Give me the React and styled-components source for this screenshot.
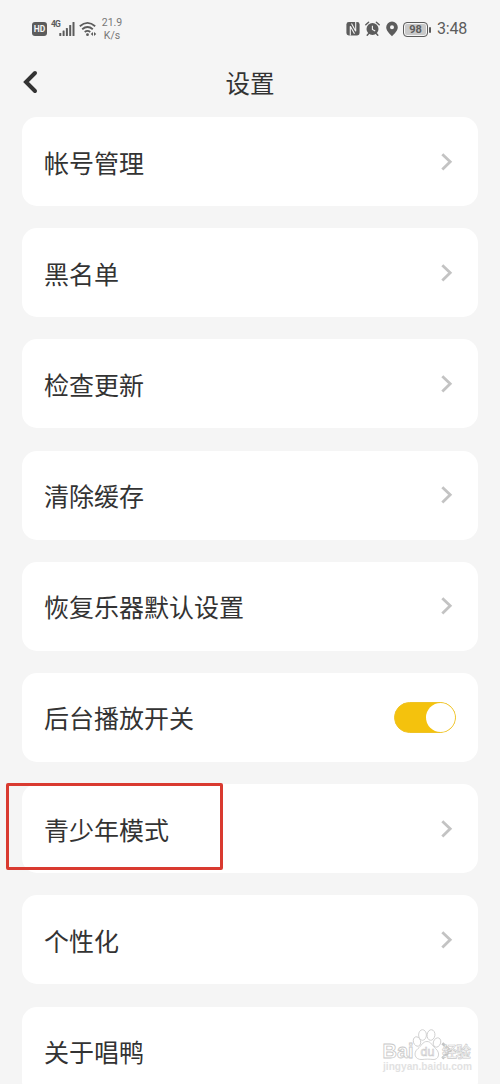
import React from 'react';
import styled, { createGlobalStyle } from 'styled-components';

const textColor = '#333333';
const statusColor = '#5c5c5c';
const font = "'Noto Sans CJK SC', sans-serif";

const GlobalStyle = createGlobalStyle`
  body {
    margin: 0;
    background-color: #f5f5f5;
    overflow: hidden;
  }
  * {
    box-sizing: border-box;
  }
`;
const Container = styled.div`
  position: relative;
  width: 500px;
  height: 1084px;
  overflow: hidden;
  background-color: #f5f5f5;
  color: ${textColor};
  font-family: ${font};
`;
const StatusBar = styled.div`
  display: flex;
  align-items: center;
  justify-content: space-between;
  height: 58px;
  padding: 0 33px 0 32px;
  color: ${statusColor};
`;
const StatusGroup = styled.div`
  display: flex;
  align-items: center;
  svg {
    display: block;
    flex: none;
  }
`;
const HdBadge = styled.span`
  display: flex;
  align-items: center;
  justify-content: center;
  width: 15px;
  height: 14px;
  margin-right: 4px;
  border-radius: 3px;
  background-color: ${statusColor};
  color: #f5f5f5;
  font: bold 8.5px/14px 'Roboto', sans-serif;
`;
const Network = styled.span`
  width: 8px;
  margin-bottom: 10px;
  font: bold 8.5px/9px 'Roboto', sans-serif;
  letter-spacing: -1px;
`;
const Speed = styled.span`
  width: 22px;
  margin-left: 4px;
  font: 10.5px/13px 'Roboto', sans-serif;
  text-align: center;
  color: #777777;
`;
const Battery = styled.span`
  position: relative;
  width: 25px;
  height: 15px;
  margin: 0 9px 0 5px;
  border: 1px solid ${statusColor};
  border-radius: 4px;
  background-color: #c9c9c9;
  box-shadow: inset 0 0 0 1px #f5f5f5;
  font: bold 11px/13px 'Roboto', sans-serif;
  text-align: center;
  &::after {
    content: '';
    position: absolute;
    top: 4px;
    right: -4px;
    width: 2px;
    height: 6px;
    border-radius: 1px;
    background-color: ${statusColor};
  }
`;
const Time = styled.span`
  width: 30px;
  font: 16px/20px 'Roboto', sans-serif;
  letter-spacing: -0.2px;
  white-space: nowrap;
`;
const Header = styled.header`
  display: grid;
  grid-template-columns: 50px 1fr 50px;
  align-items: center;
  height: 50px;
  margin-bottom: 9px;
`;
const BackButton = styled.button`
  display: flex;
  padding: 0 0 2px 22px;
  border: 0;
  background: none;
`;
const Title = styled.h1`
  margin: 0;
  font-size: 24.5px;
  font-weight: 400;
  line-height: 36px;
  text-align: center;
`;
const List = styled.div`
  display: flex;
  flex-direction: column;
  gap: 22.2px;
  padding: 0 22px;
`;
const Row = styled.div`
  display: flex;
  position: relative;
  flex: none;
  align-items: center;
  justify-content: space-between;
  height: 89px;
  padding: 0 22px;
  border-radius: 15px;
  background-color: #ffffff;
`;
const Label = styled.span`
  font-size: 25px;
  line-height: 36px;
`;
const Chevron = styled.svg`
  margin: 0 2px 0 0;
`;
const Toggle = styled.span`
  display: flex;
  justify-content: flex-end;
  width: 62px;
  height: 31px;
  border: 1px solid #efc326;
  border-radius: 16px;
  background-color: #f4c20d;
`;
const Knob = styled.span`
  width: 29px;
  height: 29px;
  border-radius: 50%;
  background-color: #ffffff;
`;
const Highlight = styled.span`
  position: absolute;
  top: -1px;
  left: -16px;
  width: 217px;
  height: 87px;
  border: 3px solid #d93a30;
  border-radius: 2px;
`;
const Watermark = styled.svg`
  position: absolute;
  left: 378px;
  top: 1024px;
`;

const items = [
  { label: '帐号管理' },
  { label: '黑名单' },
  { label: '检查更新' },
  { label: '清除缓存' },
  { label: '恢复乐器默认设置' },
  { label: '后台播放开关', toggle: true },
  { label: '青少年模式', highlighted: true },
  { label: '个性化' },
  { label: '关于唱鸭' },
];

const SignalIcon = () => (
  <svg width="16" height="16" viewBox="0 0 16 16" fill="currentColor">
    <rect x="0.3" y="12" width="2" height="3" rx=".5" />
    <rect x="3.6" y="9.5" width="2" height="5.5" rx=".5" />
    <rect x="6.9" y="7" width="2" height="8" rx=".5" />
    <rect x="10.2" y="4" width="2" height="11" rx=".5" />
    <rect x="13.5" y="1" width="2" height="14" rx=".5" />
  </svg>
);

const WifiGlyph = styled.svg`
  margin-left: 4px;
`;

const WifiIcon = () => (
  <WifiGlyph width="18" height="16" viewBox="0 0 18 16" fill="none" stroke="currentColor" strokeWidth="1.8">
    <path d="M.8 5.2q7.7-6.7 15.4 0M3.2 8.2q5.3-4.5 10.6 0M5.7 11q2.8-2.2 5.6 0" />
    <circle cx="8.5" cy="13.7" r="1.4" fill="currentColor" stroke="none" />
    <path d="M14 11 11.8 13l2.2 2zM15 11l2.2 2-2.2 2z" fill="currentColor" stroke="none" />
  </WifiGlyph>
);

const NfcIcon = () => (
  <svg width="14" height="16" viewBox="0 0 14 16">
    <rect x=".4" y="1" width="13.2" height="13.4" rx="2.4" fill="currentColor" />
    <path d="M4.3 14.6V5.2l4.2 7.6M9.700 .8v9.400L5.500 2.600" fill="none" stroke="#f5f5f5" strokeWidth="1.1" />
  </svg>
);

const AlarmGlyph = styled.svg`
  margin-left: 5px;
`;

const AlarmIcon = () => (
  <AlarmGlyph width="15" height="16" viewBox="0 0 15 16">
    <circle cx="7.5" cy="8" r="6" fill="currentColor" />
    <path d="M.8 3.8 3.6 1.2M14.2 3.8 11.4 1.2M3.5 12.7l-1.3 1.6M11.5 12.7l1.3 1.6" stroke="currentColor" strokeWidth="1.4" strokeLinecap="round" />
    <path d="M7.4 4.7V8.5l2.8 1.4" fill="none" stroke="#f5f5f5" strokeWidth="1.1" />
  </AlarmGlyph>
);

const PinGlyph = styled.svg`
  margin-left: 6px;
`;

const PinIcon = () => (
  <PinGlyph width="12" height="16" viewBox="0 0 12 16">
    <path fill="currentColor" fillRule="evenodd" d="M6 .5a5.8 5.8 0 0 1 5.8 5.8C11.8 10 8.5 12.5 6 15.2 3.5 12.5.2 10 .2 6.3A5.8 5.8 0 0 1 6 .5zM6 4.3a2 2 0 1 0 0 4 2 2 0 0 0 0-4z" />
  </PinGlyph>
);

const SettingRow = ({ label, toggle, highlighted }) => (
  <Row>
    <Label>{label}</Label>
    {toggle ? (
      <Toggle>
        <Knob />
      </Toggle>
    ) : (
      <Chevron width="14" height="20" viewBox="0 0 14 20" fill="none" stroke="#c3c3c3" strokeWidth="2.8">
        <path d="M2.3 2.2 10.2 9.8 2.3 17.4" />
      </Chevron>
    )}
    {highlighted && <Highlight />}
  </Row>
);

const BaiduWatermark = () => (
  <Watermark width="100" height="54" viewBox="0 0 100 54" fill="#ffffff" stroke="#c8c8c8" strokeWidth=".8">
    <text x="4.5" y="33.5" fontFamily="Liberation Sans, sans-serif" fontSize="20" fontWeight="bold" textLength="31" lengthAdjust="spacingAndGlyphs">Bai</text>
    <ellipse cx="39" cy="17.5" rx="3.6" ry="4.8" transform="rotate(-18 39 17.5)" />
    <ellipse cx="44.5" cy="11" rx="3.9" ry="5.3" />
    <ellipse cx="53" cy="11" rx="3.9" ry="5.3" transform="rotate(8 53 11)" />
    <ellipse cx="59" cy="18.500" rx="3.6" ry="4.8" transform="rotate(22 59 18.500)" />
    <path d="M49 17.5c4 0 5 4 8.500 7 5.500 4.500 3 11.500-2.500 11-4-.5-7-.5-11 0-7 .5-9.500-6.500-4-11 3.500-2.500 4.500-7 9-7z" />
    <text x="42.5" y="32" fontFamily="Liberation Sans, sans-serif" fontSize="12.5" textLength="14" strokeWidth=".6">du</text>
    <text x="64" y="33" fontFamily="Noto Sans CJK SC, sans-serif" fontSize="15" fontWeight="500" textLength="29" strokeWidth=".6">经验</text>
    <text x="5" y="45.5" fontFamily="Liberation Sans, sans-serif" fontSize="10" fontWeight="bold" textLength="89" lengthAdjust="spacingAndGlyphs" fill="#e2e2e2" stroke="none">jingyan.baidu.com</text>
  </Watermark>
);

const App = () => {
  return (
    <Container>
      <GlobalStyle />
      <StatusBar>
        <StatusGroup>
          <HdBadge>HD</HdBadge>
          <Network>4G</Network>
          <SignalIcon />
          <WifiIcon />
          <Speed>21.9 K/s</Speed>
        </StatusGroup>
        <StatusGroup>
          <NfcIcon />
          <AlarmIcon />
          <PinIcon />
          <Battery>98</Battery>
          <Time>3:48</Time>
        </StatusGroup>
      </StatusBar>
      <Header>
        <BackButton aria-label="返回">
          <svg width="18" height="26" viewBox="0 0 18 26" fill="none" stroke={textColor} strokeWidth="4" strokeLinecap="round">
            <path d="M13 4 4 13l9 9" />
          </svg>
        </BackButton>
        <Title>设置</Title>
      </Header>
      <List>
        {items.map(item => (
          <SettingRow key={item.label} {...item} />
        ))}
      </List>
      <BaiduWatermark />
    </Container>
  );
};

export default App;
